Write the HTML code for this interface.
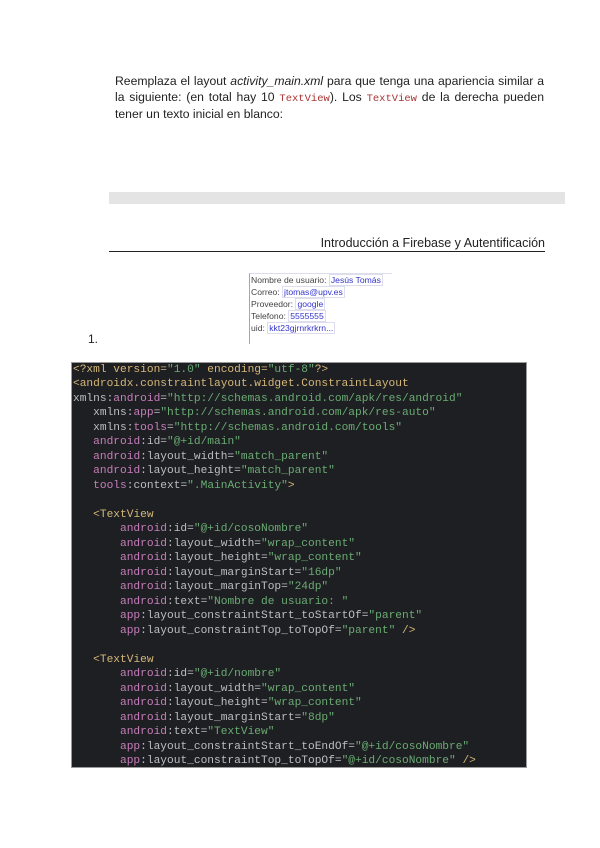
<!DOCTYPE html>
<html><head><meta charset="utf-8"><style>
body{margin:0;width:600px;height:848px;background:#fff;position:relative;font-family:"Liberation Sans",Arial,sans-serif;overflow:hidden}
.p{position:absolute;left:115px;top:74px;width:429px;font-size:12.2px;line-height:15.5px;color:#222;text-align:justify}
.p .m{font-family:"Liberation Mono",monospace;color:#a33;font-size:10.5px}
.bar{position:absolute;left:109px;top:192px;width:456px;height:12px;background:#e4e4e4}
.h{position:absolute;right:55px;top:236px;font-size:12.5px;color:#222}
.hl{position:absolute;left:109px;top:251px;width:436px;height:1px;background:#222}
.img{position:absolute;left:249px;top:273px;width:142px;height:70px;background:#fff;border-left:1px solid #9ab;border-top:1px solid #dde;font-size:8.6px;line-height:12px;color:#444}
.img div{padding-left:1px;white-space:nowrap;height:12px}
.img span{color:#33c;border:1px solid #dde;padding:0 1px}
.n{position:absolute;left:88px;top:332px;font-size:12px;color:#222}
.code{position:absolute;left:71px;top:362px;width:456px;height:406px;background:#1e1f22;border:1px solid #999;box-sizing:border-box;font-family:"Liberation Mono",monospace;font-size:11.2px;line-height:14.48px;color:#bcbec4;white-space:pre;padding-top:0px;padding-left:1px;overflow:hidden}
.t{color:#d5b778}.a{color:#c77dbb}.s{color:#6aab73}
</style></head><body>
<div class="p">Reemplaza el layout <i>activity_main.xml</i> para que tenga una apariencia similar a la siguiente: (en total hay 10 <span class="m">TextView</span>). Los <span class="m">TextView</span> de la derecha pueden tener un texto inicial en blanco:</div>
<div class="bar"></div>
<div class="h">Introducción a Firebase y Autentificación</div>
<div class="hl"></div>
<div class="img">
<div>Nombre de usuario: <span>Jesús Tomás</span></div>
<div>Correo: <span>jtomas@upv.es</span></div>
<div>Proveedor: <span>google</span></div>
<div>Telefono: <span>5555555</span></div>
<div>uid: <span>kkt23gjrnrkrkrn...</span></div>
</div>
<div class="n">1.</div>
<div class="code"><span class="t">&lt;?xml version=</span><span class="s">"1.0"</span><span class="t"> encoding=</span><span class="s">"utf-8"</span><span class="t">?&gt;</span>
<span class="t">&lt;androidx.constraintlayout.widget.ConstraintLayout</span>
xmlns:<span class="a">android</span>=<span class="s">"http://schemas.android.com/apk/res/android"</span>
   xmlns:<span class="a">app</span>=<span class="s">"http://schemas.android.com/apk/res-auto"</span>
   xmlns:<span class="a">tools</span>=<span class="s">"http://schemas.android.com/tools"</span>
   <span class="a">android</span>:id=<span class="s">"@+id/main"</span>
   <span class="a">android</span>:layout_width=<span class="s">"match_parent"</span>
   <span class="a">android</span>:layout_height=<span class="s">"match_parent"</span>
   <span class="a">tools</span>:context=<span class="s">".MainActivity"</span><span class="t">&gt;</span>

   <span class="t">&lt;TextView</span>
       <span class="a">android</span>:id=<span class="s">"@+id/cosoNombre"</span>
       <span class="a">android</span>:layout_width=<span class="s">"wrap_content"</span>
       <span class="a">android</span>:layout_height=<span class="s">"wrap_content"</span>
       <span class="a">android</span>:layout_marginStart=<span class="s">"16dp"</span>
       <span class="a">android</span>:layout_marginTop=<span class="s">"24dp"</span>
       <span class="a">android</span>:text=<span class="s">"Nombre de usuario: "</span>
       <span class="a">app</span>:layout_constraintStart_toStartOf=<span class="s">"parent"</span>
       <span class="a">app</span>:layout_constraintTop_toTopOf=<span class="s">"parent"</span> <span class="t">/&gt;</span>

   <span class="t">&lt;TextView</span>
       <span class="a">android</span>:id=<span class="s">"@+id/nombre"</span>
       <span class="a">android</span>:layout_width=<span class="s">"wrap_content"</span>
       <span class="a">android</span>:layout_height=<span class="s">"wrap_content"</span>
       <span class="a">android</span>:layout_marginStart=<span class="s">"8dp"</span>
       <span class="a">android</span>:text=<span class="s">"TextView"</span>
       <span class="a">app</span>:layout_constraintStart_toEndOf=<span class="s">"@+id/cosoNombre"</span>
       <span class="a">app</span>:layout_constraintTop_toTopOf=<span class="s">"@+id/cosoNombre"</span> <span class="t">/&gt;</span></div>
</body></html>
